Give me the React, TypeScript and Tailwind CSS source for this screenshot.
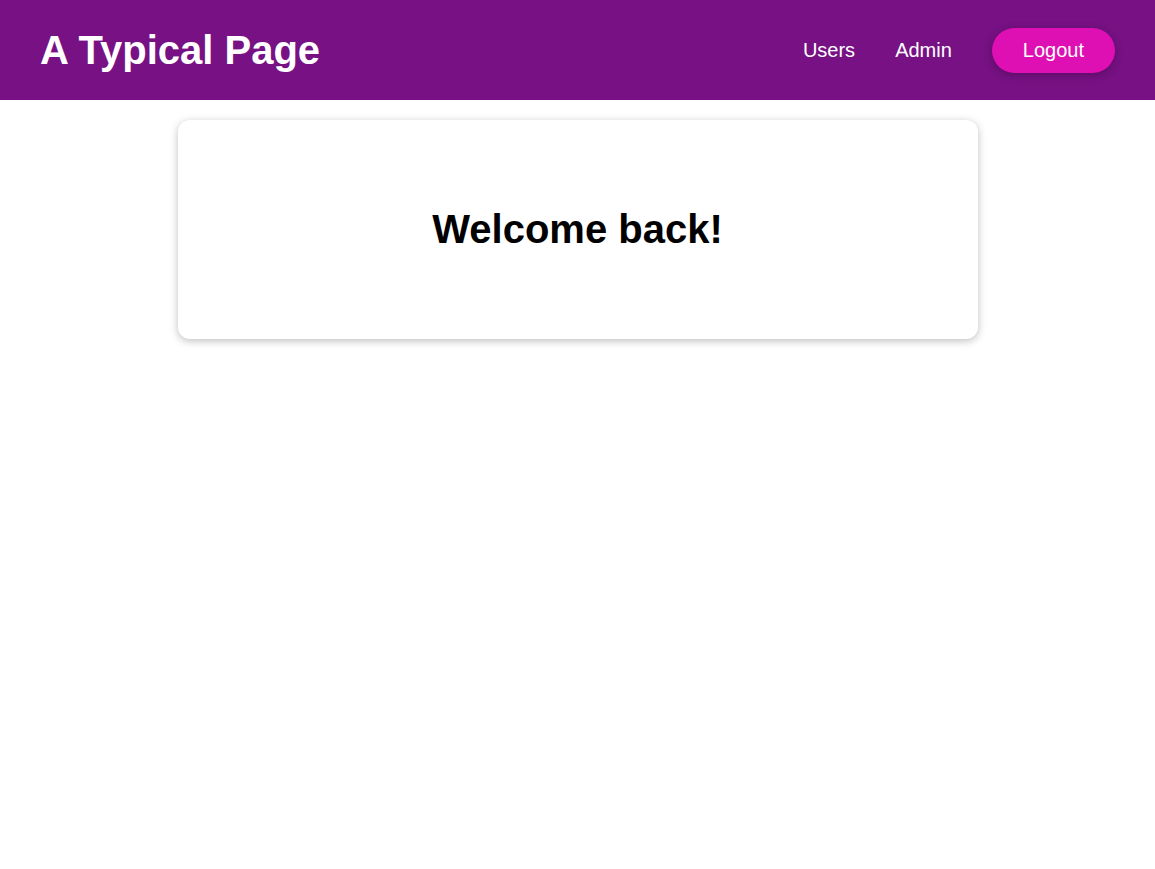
export default function App() {
  return (
    <div className="min-h-screen bg-white" style={{ fontFamily: '"Liberation Sans", Arial, sans-serif' }}>
      <header className="flex h-[100px] items-center justify-between bg-[#771184] px-10">
        <h1 className="text-[40px] font-bold leading-none text-white">A Typical Page</h1>
        <nav className="flex items-center gap-10">
          <a className="text-[20px] text-white">Users</a>
          <a className="text-[20px] text-white">Admin</a>
          <button className="h-[45px] rounded-full bg-[#de10b3] px-[31px] text-[20px] text-white shadow-[0_2px_8px_rgba(0,0,0,0.26)]">
            Logout
          </button>
        </nav>
      </header>
      <main className="flex justify-center pt-5">
        <div className="w-[800px] rounded-xl bg-white py-[85px] text-center shadow-[0_2px_8px_rgba(0,0,0,0.26)]">
          <h2 className="text-[40px] font-bold leading-[49px] text-black">Welcome back!</h2>
        </div>
      </main>
    </div>
  );
}
